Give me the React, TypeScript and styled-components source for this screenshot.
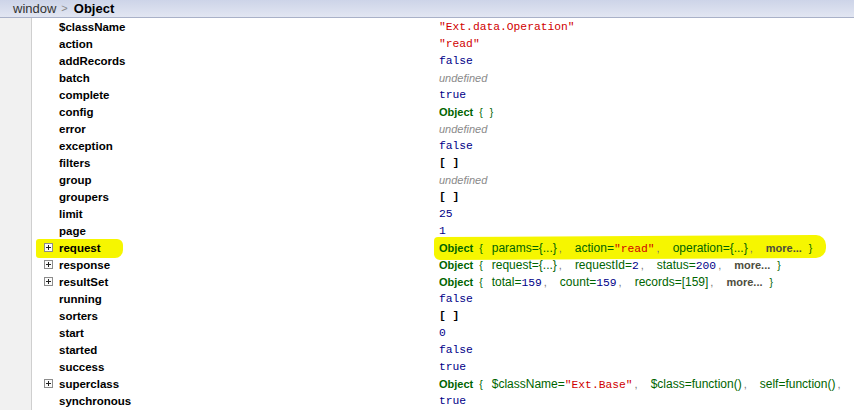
import React from "react";
import styled, { createGlobalStyle } from "styled-components";

const Global = createGlobalStyle`
  html, body { margin: 0; padding: 0; background: #fff; overflow: hidden; }
  body { width: 854px; height: 410px; }
`;

const Page = styled.div`
  width: 854px;
  height: 410px;
  display: flex;
  flex-direction: column;
  overflow: hidden;
  font-family: "Liberation Sans", Arial, sans-serif;
`;

const Header = styled.div`
  height: 17px;
  flex: none;
  display: flex;
  align-items: center;
  padding-left: 13px;
  background: linear-gradient(#cdd4e8, #e2e6f2);
  border-bottom: 1px solid #a9b1c8;
  font-size: 13px;
  line-height: 17px;
  color: #333;
`;

const Crumb = styled.span<{ $current?: boolean }>`
  font-weight: ${(p) => (p.$current ? "bold" : "normal")};
  color: ${(p) => (p.$current ? "#000" : "#333")};
`;

const Sep = styled.span`
  font-size: 11px;
  color: #888;
  margin: 0 6px 0 5px;
`;

const Body = styled.div`
  flex: 1;
  display: flex;
  min-height: 0;
`;

const Gutter = styled.div`
  width: 31px;
  flex: none;
  background: #f1f1f1;
  border-right: 1px solid #cfcfcf;
`;

const Table = styled.div`
  flex: 1;
  display: flex;
  flex-direction: column;
`;

const Row = styled.div`
  height: 17px;
  flex: none;
  display: grid;
  grid-template-columns: 407px 1fr;
  align-items: center;
  position: relative;
`;

const NameCell = styled.div<{ $mark?: boolean }>`
  position: relative;
  display: flex;
  align-items: center;
  padding-left: 12px;
  font-size: 11.5px;
  font-weight: bold;
  color: #000;
  white-space: nowrap;
  z-index: 0;
  &::before {
    content: "";
    display: ${(p) => (p.$mark ? "block" : "none")};
    position: absolute;
    left: 4px;
    width: 87px;
    top: -3px;
    bottom: -4px;
    background: #f6f600;
    border-radius: 3px 6px 8px 3px;
    z-index: -1;
  }
`;

const Toggle = styled.span<{ $hidden?: boolean }>`
  width: 7px;
  height: 7px;
  border: 1px solid #8c8c8c;
  background: #fbfbfb;
  margin-right: 6px;
  position: relative;
  visibility: ${(p) => (p.$hidden ? "hidden" : "visible")};
  flex: none;
  &::before {
    content: "";
    position: absolute;
    left: 1px;
    top: 3px;
    width: 5px;
    height: 1px;
    background: #222;
  }
  &::after {
    content: "";
    position: absolute;
    left: 3px;
    top: 1px;
    width: 1px;
    height: 5px;
    background: #222;
  }
`;

const ValueCell = styled.div<{ $mark?: boolean }>`
  position: relative;
  white-space: nowrap;
  font-size: 11px;
  display: flex;
  align-items: baseline;
  z-index: 0;
  &::before {
    content: "";
    display: ${(p) => (p.$mark ? "block" : "none")};
    position: absolute;
    left: -5px;
    width: 392px;
    top: -5px;
    bottom: -4px;
    background: #f6f600;
    border-radius: 4px 10px 10px 6px;
    transform: skewY(-0.3deg);
    z-index: -1;
  }
`;

const Str = styled.span`
  font-family: "Liberation Mono", "Courier New", monospace;
  font-size: 11.3px;
  color: #d00000;
`;

const Mono = styled.span`
  font-family: "Liberation Mono", "Courier New", monospace;
  font-size: 11.3px;
  color: #000088;
`;

const Undef = styled.span`
  font-style: italic;
  color: #8a8a8a;
`;

const Obj = styled.span`
  color: #006400;
  font-weight: bold;
`;

const Brace = styled.span<{ $before: number; $after: number }>`
  color: #006400;
  font-size: 10.5px;
  margin: 0 ${(p) => p.$after}px 0 ${(p) => p.$before}px;
`;

const Prop = styled.span`
  color: #006400;
  font-size: 12px;
`;

const Comma = styled.span`
  color: #777;
  margin: 0 13px 0 2px;
`;

const More = styled.span`
  color: #4d4d3d;
  font-weight: bold;
`;

const Arr = styled.span`
  font-family: "Liberation Mono", "Courier New", monospace;
  font-size: 11.3px;
  font-weight: bold;
  color: #000;
`;

type Part = React.ReactNode;

const ObjectPreview: React.FC<{ props: Part[]; more?: boolean }> = ({ props, more }) => (
  <>
    <Obj>Object</Obj>
    <Brace $before={6} $after={props.length ? 9 : 7}>
      {"{"}
    </Brace>
    {props.map((p, i) => (
      <React.Fragment key={i}>
        <Prop>{p}</Prop>
        {(i < props.length - 1 || more) && <Comma>,</Comma>}
      </React.Fragment>
    ))}
    {more && <More>more...</More>}
    {(more || !props.length) && (
      <Brace $before={more ? 7 : 0} $after={0}>
        {"}"}
      </Brace>
    )}
  </>
);

type RowData = { name: string; value: React.ReactNode; toggle?: boolean; mark?: boolean };

const rows: RowData[] = [
  { name: "$className", value: <Str>"Ext.data.Operation"</Str> },
  { name: "action", value: <Str>"read"</Str> },
  { name: "addRecords", value: <Mono>false</Mono> },
  { name: "batch", value: <Undef>undefined</Undef> },
  { name: "complete", value: <Mono>true</Mono> },
  { name: "config", value: <ObjectPreview props={[]} /> },
  { name: "error", value: <Undef>undefined</Undef> },
  { name: "exception", value: <Mono>false</Mono> },
  { name: "filters", value: <Arr>[ ]</Arr> },
  { name: "group", value: <Undef>undefined</Undef> },
  { name: "groupers", value: <Arr>[ ]</Arr> },
  { name: "limit", value: <Mono>25</Mono> },
  { name: "page", value: <Mono>1</Mono> },
  {
    name: "request",
    toggle: true,
    mark: true,
    value: (
      <ObjectPreview
        more
        props={[
          "params={...}",
          <>
            action=<Str>"read"</Str>
          </>,
          "operation={...}",
        ]}
      />
    ),
  },
  {
    name: "response",
    toggle: true,
    value: (
      <ObjectPreview
        more
        props={[
          "request={...}",
          <>
            requestId=<Mono>2</Mono>
          </>,
          <>
            status=<Mono>200</Mono>
          </>,
        ]}
      />
    ),
  },
  {
    name: "resultSet",
    toggle: true,
    value: (
      <ObjectPreview
        more
        props={[
          <>
            total=<Mono>159</Mono>
          </>,
          <>
            count=<Mono>159</Mono>
          </>,
          "records=[159]",
        ]}
      />
    ),
  },
  { name: "running", value: <Mono>false</Mono> },
  { name: "sorters", value: <Arr>[ ]</Arr> },
  { name: "start", value: <Mono>0</Mono> },
  { name: "started", value: <Mono>false</Mono> },
  { name: "success", value: <Mono>true</Mono> },
  {
    name: "superclass",
    toggle: true,
    value: (
      <>
        <ObjectPreview
          props={[
            <>
              $className=<Str>"Ext.Base"</Str>
            </>,
            "$class=function()",
            "self=function()",
          ]}
        />
        <Comma>,</Comma>
      </>
    ),
  },
  { name: "synchronous", value: <Mono>true</Mono> },
];

export default function App() {
  return (
    <Page>
      <Global />
      <Header>
        <Crumb>window</Crumb>
        <Sep>&gt;</Sep>
        <Crumb $current>Object</Crumb>
      </Header>
      <Body>
        <Gutter />
        <Table>
          {rows.map((r) => (
            <Row key={r.name}>
              <NameCell $mark={r.mark}>
                <Toggle $hidden={!r.toggle} />
                {r.name}
              </NameCell>
              <ValueCell $mark={r.mark}>{r.value}</ValueCell>
            </Row>
          ))}
        </Table>
      </Body>
    </Page>
  );
}
